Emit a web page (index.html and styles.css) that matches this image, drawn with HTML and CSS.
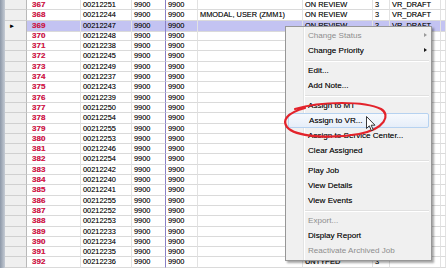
FILE: index.html
```html
<!DOCTYPE html>
<html lang="en">
<head>
  <meta charset="UTF-8" />
  <title>Job List</title>
  <link rel="stylesheet" href="styles.css">
</head>
<body>

  <div class="grid">
    <div class="row"><span class="frame"></span><span class="hdr"></span><span class="c num">367</span><span class="c">00212251</span><span class="c">9900</span><span class="c key">9900</span><span class="c"></span><span class="c">ON REVIEW</span><span class="c">3</span><span class="c">VR_DRAFT</span><span class="c"></span></div>
    <div class="row"><span class="frame"></span><span class="hdr"></span><span class="c num">368</span><span class="c">00212244</span><span class="c">9900</span><span class="c key">9900</span><span class="c">MMODAL, USER (ZMM1)</span><span class="c">ON REVIEW</span><span class="c">3</span><span class="c">VR_DRAFT</span><span class="c"></span></div>
    <div class="row sel"><span class="frame"></span><span class="hdr">&#9658;</span><span class="c num">369</span><span class="c">00212247</span><span class="c">9900</span><span class="c key">9900</span><span class="c"></span><span class="c">ON REVIEW</span><span class="c">3</span><span class="c">VR_DRAFT</span><span class="c"></span></div>
    <div class="row"><span class="frame"></span><span class="hdr"></span><span class="c num">370</span><span class="c">00212248</span><span class="c">9900</span><span class="c key">9900</span><span class="c"></span><span class="c"></span><span class="c"></span><span class="c"></span><span class="c"></span></div>
    <div class="row"><span class="frame"></span><span class="hdr"></span><span class="c num">371</span><span class="c">00212238</span><span class="c">9900</span><span class="c key">9900</span><span class="c"></span><span class="c"></span><span class="c"></span><span class="c"></span><span class="c"></span></div>
    <div class="row"><span class="frame"></span><span class="hdr"></span><span class="c num">372</span><span class="c">00212245</span><span class="c">9900</span><span class="c key">9900</span><span class="c"></span><span class="c"></span><span class="c"></span><span class="c"></span><span class="c"></span></div>
    <div class="row"><span class="frame"></span><span class="hdr"></span><span class="c num">373</span><span class="c">00212249</span><span class="c">9900</span><span class="c key">9900</span><span class="c"></span><span class="c"></span><span class="c"></span><span class="c"></span><span class="c"></span></div>
    <div class="row"><span class="frame"></span><span class="hdr"></span><span class="c num">374</span><span class="c">00212237</span><span class="c">9900</span><span class="c key">9900</span><span class="c"></span><span class="c"></span><span class="c"></span><span class="c"></span><span class="c"></span></div>
    <div class="row"><span class="frame"></span><span class="hdr"></span><span class="c num">375</span><span class="c">00212243</span><span class="c">9900</span><span class="c key">9900</span><span class="c"></span><span class="c"></span><span class="c"></span><span class="c"></span><span class="c"></span></div>
    <div class="row"><span class="frame"></span><span class="hdr"></span><span class="c num">376</span><span class="c">00212239</span><span class="c">9900</span><span class="c key">9900</span><span class="c"></span><span class="c"></span><span class="c"></span><span class="c"></span><span class="c"></span></div>
    <div class="row"><span class="frame"></span><span class="hdr"></span><span class="c num">377</span><span class="c">00212250</span><span class="c">9900</span><span class="c key">9900</span><span class="c"></span><span class="c"></span><span class="c"></span><span class="c"></span><span class="c"></span></div>
    <div class="row"><span class="frame"></span><span class="hdr"></span><span class="c num">378</span><span class="c">00212254</span><span class="c">9900</span><span class="c key">9900</span><span class="c"></span><span class="c"></span><span class="c"></span><span class="c"></span><span class="c"></span></div>
    <div class="row"><span class="frame"></span><span class="hdr"></span><span class="c num">379</span><span class="c">00212255</span><span class="c">9900</span><span class="c key">9900</span><span class="c"></span><span class="c"></span><span class="c"></span><span class="c"></span><span class="c"></span></div>
    <div class="row"><span class="frame"></span><span class="hdr"></span><span class="c num">380</span><span class="c">00212253</span><span class="c">9900</span><span class="c key">9900</span><span class="c"></span><span class="c"></span><span class="c"></span><span class="c"></span><span class="c"></span></div>
    <div class="row"><span class="frame"></span><span class="hdr"></span><span class="c num">381</span><span class="c">00212246</span><span class="c">9900</span><span class="c key">9900</span><span class="c"></span><span class="c"></span><span class="c"></span><span class="c"></span><span class="c"></span></div>
    <div class="row"><span class="frame"></span><span class="hdr"></span><span class="c num">382</span><span class="c">00212254</span><span class="c">9900</span><span class="c key">9900</span><span class="c"></span><span class="c"></span><span class="c"></span><span class="c"></span><span class="c"></span></div>
    <div class="row"><span class="frame"></span><span class="hdr"></span><span class="c num">383</span><span class="c">00212242</span><span class="c">9900</span><span class="c key">9900</span><span class="c"></span><span class="c"></span><span class="c"></span><span class="c"></span><span class="c"></span></div>
    <div class="row"><span class="frame"></span><span class="hdr"></span><span class="c num">384</span><span class="c">00212240</span><span class="c">9900</span><span class="c key">9900</span><span class="c"></span><span class="c"></span><span class="c"></span><span class="c"></span><span class="c"></span></div>
    <div class="row"><span class="frame"></span><span class="hdr"></span><span class="c num">385</span><span class="c">00212241</span><span class="c">9900</span><span class="c key">9900</span><span class="c"></span><span class="c"></span><span class="c"></span><span class="c"></span><span class="c"></span></div>
    <div class="row"><span class="frame"></span><span class="hdr"></span><span class="c num">386</span><span class="c">00212255</span><span class="c">9900</span><span class="c key">9900</span><span class="c"></span><span class="c"></span><span class="c"></span><span class="c"></span><span class="c"></span></div>
    <div class="row"><span class="frame"></span><span class="hdr"></span><span class="c num">387</span><span class="c">00212252</span><span class="c">9900</span><span class="c key">9900</span><span class="c"></span><span class="c"></span><span class="c"></span><span class="c"></span><span class="c"></span></div>
    <div class="row"><span class="frame"></span><span class="hdr"></span><span class="c num">388</span><span class="c">00212253</span><span class="c">9900</span><span class="c key">9900</span><span class="c"></span><span class="c"></span><span class="c"></span><span class="c"></span><span class="c"></span></div>
    <div class="row"><span class="frame"></span><span class="hdr"></span><span class="c num">389</span><span class="c">00212233</span><span class="c">9900</span><span class="c key">9900</span><span class="c"></span><span class="c"></span><span class="c"></span><span class="c"></span><span class="c"></span></div>
    <div class="row"><span class="frame"></span><span class="hdr"></span><span class="c num">390</span><span class="c">00212234</span><span class="c">9900</span><span class="c key">9900</span><span class="c"></span><span class="c"></span><span class="c"></span><span class="c"></span><span class="c"></span></div>
    <div class="row"><span class="frame"></span><span class="hdr"></span><span class="c num">391</span><span class="c">00212235</span><span class="c">9900</span><span class="c key">9900</span><span class="c"></span><span class="c"></span><span class="c"></span><span class="c"></span><span class="c"></span></div>
    <div class="row"><span class="frame"></span><span class="hdr"></span><span class="c num">392</span><span class="c">00212236</span><span class="c">9900</span><span class="c key">9900</span><span class="c"></span><span class="c">UNTYPED</span><span class="c">3</span><span class="c"></span><span class="c"></span></div>
  </div>

  <div class="menu">
    <div class="item off">Change Status<span class="arrow"></span></div>
    <div class="item">Change Priority<span class="arrow"></span></div>
    <div class="sep"></div>
    <div class="item">Edit...</div>
    <div class="item">Add Note...</div>
    <div class="sep"></div>
    <div class="item">Assign to MT</div>
    <div class="item hot">Assign to VR...</div>
    <div class="item">Assign to Service Center...</div>
    <div class="item">Clear Assigned</div>
    <div class="sep"></div>
    <div class="item">Play Job</div>
    <div class="item">View Details</div>
    <div class="item">View Events</div>
    <div class="sep"></div>
    <div class="item off">Export...</div>
    <div class="item">Display Report</div>
    <div class="item off">Reactivate Archived Job</div>
  </div>

  <!-- red marker drawn round the menu item -->
  <svg class="ring" width="110" height="44" viewBox="0 0 110 44">
    <path d="M14 10 C40 2 84 2 100 10 C110 16 104 30 78 35 C50 40 14 38 6 28 C1 21 6 14 24 9" fill="none" stroke="#e3232b" stroke-width="2.2" stroke-linecap="round"/>
  </svg>

  <svg class="cursor" width="12" height="16" viewBox="0 0 12 16">
    <path d="M0.5 0.5 L0.5 12.5 L3.3 9.8 L5.4 14.6 L7.2 13.8 L5.2 9.2 L9 9.2 Z" fill="#fff" stroke="#222" stroke-width="0.9" stroke-linejoin="round"/>
  </svg>

</body>
</html>
```

FILE: styles.css
```css
body {
  margin: 0;
  width: 446px;
  height: 268px;
  overflow: hidden;
  background: #fff;
  font-family: 'Liberation Sans', Arial, sans-serif;
  position: relative;
}

.grid {
  display: flex;
  flex-direction: column;
}

.row {
  display: grid;
  grid-template-columns: 5px 22px 54px 51px 34px 32px 105px 70px 17px 51px 1fr;
  height: 10.3px;
  font-size: 7.4px;
  line-height: 10px;
  color: #111;
  text-shadow: 0 0 0.4px rgba(0, 0, 0, 0.5);
}

.frame {
  background: linear-gradient(to right, #8d98a8, #c6ccd5);
}

.hdr {
  background: #efefef;
  border-right: 1px solid #b9b9b9;
  border-bottom: 1px solid #d0d0d0;
  font-size: 6px;
  color: #000;
  padding-left: 4px;
}

.c {
  border-right: 1px solid #e2e2e2;
  border-bottom: 1px solid #dadada;
  padding-left: 2px;
  white-space: nowrap;
  overflow: hidden;
}

.num {
  color: #e0144a;
  font-weight: bold;
  font-size: 8px;
  padding-left: 5px;
}

.key {
  border-left: 1px solid #8a80c6;
  margin-left: -1px;
}

.sel .c {
  background: #c3c3f2;
}

.menu {
  position: absolute;
  left: 285px;
  top: 26px;
  width: 145px;
  padding: 1px 0 2px;
  background: #f0f0f0 linear-gradient(to right, transparent 17px, #e2e3e3 17px, #e2e3e3 18px, #fff 18px, #fff 19px, transparent 19px);
  border: 1px solid #979797;
  box-shadow: 2px 2px 2px rgba(0, 0, 0, 0.35);
  font-size: 8.1px;
  color: #111;
  text-shadow: 0 0 0.4px rgba(0, 0, 0, 0.5);
}

.item {
  position: relative;
  height: 15px;
  line-height: 15px;
  padding-left: 22px;
  white-space: nowrap;
}

.item.off {
  color: #8e8e8e;
  text-shadow: none;
}

.item.hot {
  margin: 0 2px;
  padding-left: 20px;
  border: 1px solid #b6d2f0;
  border-radius: 2px;
  height: 13px;
  line-height: 13px;
  background: linear-gradient(#f6f9fd, #e6eef9);
}

.arrow {
  position: absolute;
  right: 4px;
  top: 5px;
  border-left: 3px solid #1a1a1a;
  border-top: 2.5px solid transparent;
  border-bottom: 2.5px solid transparent;
}

.off .arrow {
  border-left-color: #9a9a9a;
}

.sep {
  height: 5px;
  margin-left: 19px;
  margin-right: 2px;
  background: linear-gradient(transparent 2px, #e0e0e0 2px, #e0e0e0 3px, #fff 3px, #fff 4px, transparent 4px);
}

.ring {
  position: absolute;
  left: 281px;
  top: 99px;
}

.cursor {
  position: absolute;
  left: 366px;
  top: 116px;
}
```
